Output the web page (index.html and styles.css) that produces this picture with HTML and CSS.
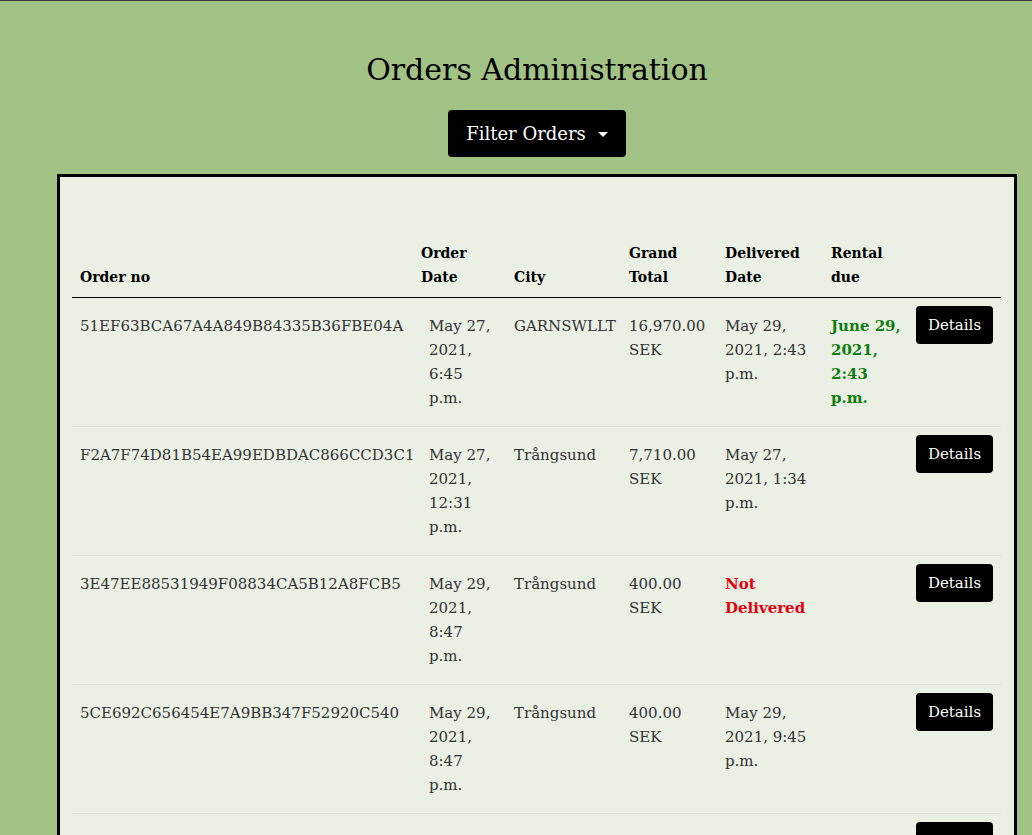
FILE: index.html
```html
<!DOCTYPE html>
<html lang="en">
<head>
<meta charset="utf-8">
<title>Orders Administration</title>
<link rel="stylesheet" href="styles.css">
</head>
<body>
<div class="page">
  <h1 class="title">Orders Administration</h1>
  <div class="filter">
    <button class="filter-btn" type="button">Filter Orders <span class="caret"></span></button>
  </div>
  <div class="card">
    <table class="orders">
      <colgroup>
        <col class="c-no"><col class="c-date"><col class="c-city"><col class="c-total"><col class="c-deliv"><col class="c-due"><col class="c-act">
      </colgroup>
      <thead>
        <tr>
          <th>Order no</th>
          <th>Order Date</th>
          <th>City</th>
          <th>Grand Total</th>
          <th>Delivered Date</th>
          <th>Rental due</th>
          <th></th>
        </tr>
      </thead>
      <tbody>
        <tr>
          <td>51EF63BCA67A4A849B84335B36FBE04A</td>
          <td class="odate">May 27, 2021, 6:45 p.m.</td>
          <td>GARNSWLLT</td>
          <td>16,970.00 SEK</td>
          <td>May 29, 2021, 2:43 p.m.</td>
          <td class="due">June 29, 2021, 2:43 p.m.</td>
          <td class="act"><button class="details" type="button">Details</button></td>
        </tr>
        <tr>
          <td>F2A7F74D81B54EA99EDBDAC866CCD3C1</td>
          <td class="odate">May 27, 2021, 12:31 p.m.</td>
          <td>Trångsund</td>
          <td>7,710.00 SEK</td>
          <td>May 27, 2021, 1:34 p.m.</td>
          <td></td>
          <td class="act"><button class="details" type="button">Details</button></td>
        </tr>
        <tr>
          <td>3E47EE88531949F08834CA5B12A8FCB5</td>
          <td class="odate">May 29, 2021, 8:47 p.m.</td>
          <td>Trångsund</td>
          <td>400.00 SEK</td>
          <td class="notdel">Not Delivered</td>
          <td></td>
          <td class="act"><button class="details" type="button">Details</button></td>
        </tr>
        <tr>
          <td>5CE692C656454E7A9BB347F52920C540</td>
          <td class="odate">May 29, 2021, 8:47 p.m.</td>
          <td>Trångsund</td>
          <td>400.00 SEK</td>
          <td>May 29, 2021, 9:45 p.m.</td>
          <td></td>
          <td class="act"><button class="details" type="button">Details</button></td>
        </tr>
        <tr>
          <td>8B21C4D07E5A4F3C9A6E12D47B90F2A8</td>
          <td class="odate">May 30, 2021, 10:12 a.m.</td>
          <td>GARNSWLLT</td>
          <td>400.00 SEK</td>
          <td>May 30, 2021, 3:20 p.m.</td>
          <td></td>
          <td class="act"><button class="details" type="button">Details</button></td>
        </tr>
      </tbody>
    </table>
  </div>
</div>
</body>
</html>
```

FILE: styles.css
```css
html, body {
  margin: 0;
  padding: 0;
}
body {
  background: #a3c285;
  border-top: 1px solid #3b3b3b;
  font-family: "DejaVu Serif", serif;
  color: #333;
}
.page {
  width: 960px;
  margin-left: 57px;
}
.title {
  margin: 0;
  padding-top: 50px;
  text-align: center;
  font-size: 30px;
  line-height: 38px;
  font-weight: normal;
  color: #000;
}
.filter {
  display: flex;
  justify-content: center;
  margin-top: 21px;
}
.filter-btn {
  display: flex;
  align-items: center;
  gap: 12px;
  height: 47px;
  padding: 0 18px;
  background: #000;
  color: #fff;
  border: none;
  border-radius: 4px;
  font-family: "DejaVu Serif", serif;
  font-size: 18px;
}
.caret {
  width: 0;
  height: 0;
  border-left: 5px solid transparent;
  border-right: 5px solid transparent;
  border-top: 5px solid #fff;
  margin-top: 1px;
}
.card {
  margin-top: 17px;
  border: 3px solid #000;
  background: #eaf0e3;
  padding: 56px 13px 40px 12px;
}
.orders {
  width: 929px;
  table-layout: fixed;
  border-collapse: collapse;
  font-size: 15px;
  line-height: 24px;
}
.c-no { width: 341px; }
.c-date { width: 93px; }
.c-city { width: 115px; }
.c-total { width: 96px; }
.c-deliv { width: 106px; }
.c-due { width: 85px; }
.c-act { width: 93px; }
.orders th {
  text-align: left;
  vertical-align: bottom;
  padding: 8px;
  font-size: 14px;
  font-weight: bold;
  color: #000;
  border-bottom: 1px solid #000;
}
.orders td {
  vertical-align: top;
  padding: 16px 8px;
  border-top: 1px solid #dde3d6;
  color: #333;
}
.orders tbody tr:first-child td {
  border-top: none;
}
.orders td.odate {
  padding-left: 16px;
}
.orders td.due {
  padding-right: 3px;
  color: #117c11;
  font-weight: bold;
}
.orders td.notdel {
  color: #e3000f;
  font-weight: bold;
}
.orders td.act {
  padding: 8px;
}
.details {
  height: 38px;
  width: 77px;
  padding: 0;
  background: #000;
  color: #fff;
  border: none;
  border-radius: 4px;
  font-family: "DejaVu Serif", serif;
  font-size: 15px;
}
```
